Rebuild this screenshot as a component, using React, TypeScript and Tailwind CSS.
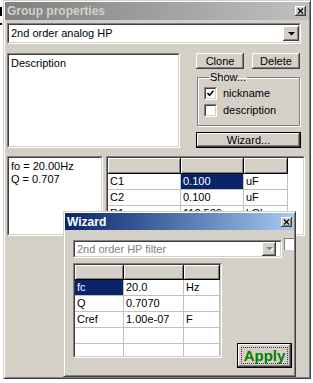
import type { ReactNode } from 'react'

const raised =
  'bg-[#d4d0c8] shadow-[inset_-1px_-1px_#404040,inset_1px_1px_#fff,inset_-2px_-2px_#808080]'

function Sunken({ className = '', inner = '', children }: { className?: string; inner?: string; children?: ReactNode }) {
  return (
    <div className={`border border-t-[#808080] border-l-[#808080] border-r-white border-b-white ${className}`}>
      <div className={`h-full border border-t-[#404040] border-l-[#404040] border-r-[#d4d0c8] border-b-[#d4d0c8] overflow-hidden ${inner}`}>
        {children}
      </div>
    </div>
  )
}

function CloseBox() {
  return (
    <div className={`w-[11px] h-[10px] flex items-center justify-center ${raised}`}>
      <svg width="7" height="6" viewBox="0 0 7 6">
        <path d="M1 0.5l5 5M6 0.5l-5 5" stroke="#000" strokeWidth="1.1" />
      </svg>
    </div>
  )
}

function Arrow({ off }: { off?: boolean }) {
  return (
    <svg width="7" height="4" viewBox="0 0 7 4">
      {off && <path d="M1 1h7l-3.5 3.5z" fill="#fff" />}
      <path d="M0 0h7l-3.5 3.5z" fill={off ? '#808080' : '#000'} />
    </svg>
  )
}

function Check({ on, label }: { on?: boolean; label: string }) {
  return (
    <div className="flex items-center h-[13px]">
      <Sunken className="w-[13px] h-[13px]" inner="bg-white flex items-center justify-center">
        {on && (
          <svg width="7" height="7" viewBox="0 0 7 7">
            <path d="M0.5 3l2 2.2 4-4.5" stroke="#000" strokeWidth="1.6" fill="none" />
          </svg>
        )}
      </Sunken>
      <span className="ml-[6px]">{label}</span>
    </div>
  )
}

const headCell =
  'h-full bg-[#d4d0c8] border-r border-b border-black shadow-[inset_1px_1px_#fff,inset_-1px_-1px_#808080]'
const cell = 'h-full border-r border-b border-[#c0c0c0] pl-[2px] leading-[15px] whitespace-nowrap overflow-hidden'

const mainRows = [
  ['C1', '0.100', 'uF'],
  ['C2', '0.100', 'uF'],
  ['R1', '112.539', 'kOhm'],
  ['R2', '112.539', 'kOhm'],
]

const wizRows = [
  ['fc', '20.0', 'Hz'],
  ['Q', '0.7070', ''],
  ['Cref', '1.00e-07', 'F'],
  ['', '', ''],
  ['', '', ''],
]

export default function App() {
  return (
    <div className="relative w-[313px] h-[383px] overflow-hidden bg-white pl-[3px] font-['Liberation_Sans',Arial,sans-serif] text-[11px] text-black">
      <div className="absolute left-0 top-[7px] w-[2px] h-[9px] bg-black" />
      <div className="absolute left-0 top-[23px] w-[2px] h-[2px] bg-black" />

      {/* Group properties window */}
      <div className="w-[308px] h-[379px] bg-[#d4d0c8] border border-t-[#d4d0c8] border-l-[#d4d0c8] border-r-[#404040] border-b-[#404040] shadow-[inset_1px_1px_#fff,inset_-1px_-1px_#808080] p-[1px]">
        <div className="h-[18px] flex items-center justify-between pl-[2px] pr-[3px] bg-linear-to-r from-[#808080] to-[#c0c0c0]">
          <span className="font-bold text-[12px] text-[#d4d0c8]">Group properties</span>
          <CloseBox />
        </div>

        <div className="pl-[2px] pt-[3px]">
          <Sunken className="w-[294px] h-[21px]" inner="bg-white flex items-center justify-between pl-[2px] pr-[0px]">
            <span>2nd order analog HP</span>
            <div className={`w-[16px] h-[15px] flex items-center justify-center ${raised}`}>
              <Arrow />
            </div>
          </Sunken>

          <div className="flex mt-[9px]">
            <Sunken className="w-[173px] h-[95px]" inner="bg-white pl-[2px] pt-[2px] leading-[13px]">
              Description
            </Sunken>
            <div className="ml-[16px] w-[105px]">
              <div className="flex gap-[8px]">
                <div className={`w-[48px] h-[16px] flex items-center justify-center ${raised}`}>Clone</div>
                <div className={`w-[48px] h-[16px] flex items-center justify-center ${raised}`}>Delete</div>
              </div>
              <fieldset className="mt-[2px] ml-[1px] w-[103px] border border-[#808080] shadow-[1px_1px_#fff,inset_1px_1px_#fff] pl-[6px] pb-[8px]">
                <legend className="ml-[5px] px-[1px] leading-[13px]">Show...</legend>
                <div className="mt-[3px] flex flex-col gap-[4px]">
                  <Check on label="nickname" />
                  <Check label="description" />
                </div>
              </fieldset>
              <div className="mt-[6px] w-[105px] h-[16px] border border-black">
                <div className={`h-full flex items-center justify-center ${raised}`}>Wizard...</div>
              </div>
            </div>
          </div>

          <div className="flex mt-[8px]">
            <Sunken className="w-[96px] h-[80px]" inner="bg-white pl-[2px] pt-[2px] leading-[13px]">
              <div>fo = 20.00Hz</div>
              <div>Q = 0.707</div>
            </Sunken>
            <Sunken className="ml-[3px] w-[199px] h-[80px]" inner="bg-white">
              <div className="flex h-[16px]">
                <div className={`w-[73px] ${headCell}`} />
                <div className={`w-[63px] ${headCell}`} />
                <div className={`w-[44px] ${headCell}`} />
              </div>
              {mainRows.map((r, i) => (
                <div key={i} className="flex h-[16px]">
                  <div className={`w-[73px] ${cell}`}>{r[0]}</div>
                  <div className={`w-[63px] ${cell} ${i === 0 ? 'bg-[#0a246a] text-white' : ''}`}>{r[1]}</div>
                  <div className={`w-[44px] ${cell}`}>{r[2]}</div>
                </div>
              ))}
            </Sunken>
          </div>
        </div>
      </div>

      {/* Wizard window, floating over the group window */}
      <div className="absolute left-[63px] top-[211px] w-[233px] h-[166px] bg-[#d4d0c8] border border-t-[#d4d0c8] border-l-[#d4d0c8] border-r-[#404040] border-b-[#404040] shadow-[inset_1px_1px_#fff,inset_-1px_-1px_#808080] p-[1px]">
        <div className="h-[17px] flex items-center justify-between pl-[2px] pr-[2px] bg-linear-to-r from-[#0a246a] to-[#a6caf0]">
          <span className="font-bold text-[12px] text-white">Wizard</span>
          <CloseBox />
        </div>
        <div className="pl-[8px] pt-[10px]">
          <div className="flex items-start">
            <Sunken className="w-[210px] h-[18px]" inner="bg-white flex items-center justify-between pl-[2px] pr-[4px]">
              <span className="text-[#808080]">2nd order HP filter</span>
              <div className={`w-[14px] h-[14px] flex items-center justify-center ${raised}`}>
                <Arrow off />
              </div>
            </Sunken>
            <div className="ml-[2px] -mt-[2px] w-[10px] h-[12px] bg-white border-t border-l border-[#808080]" />
          </div>
          <div className="flex items-start mt-[5px]">
            <Sunken className="w-[149px] h-[95px]" inner="bg-white">
              <div className="flex h-[15px]">
                <div className={`w-[49px] ${headCell}`} />
                <div className={`w-[60px] ${headCell}`} />
                <div className={`flex-1 ${headCell}`} />
              </div>
              {wizRows.map((r, i) => (
                <div key={i} className="flex h-[16px]">
                  <div className={`w-[49px] ${cell} ${i === 0 ? 'bg-[#0a246a] text-white' : ''}`}>{r[0]}</div>
                  <div className={`w-[60px] ${cell}`}>{r[1]}</div>
                  <div className={`flex-1 ${cell}`}>{r[2]}</div>
                </div>
              ))}
            </Sunken>
            <div className="ml-[15px] mt-[80px] w-[55px] h-[25px] border border-black">
              <div className={`h-full p-[3px] ${raised}`}>
                <div className="h-full border border-dotted border-[#602060] flex items-center justify-center">
                  <span className="font-bold text-[15px] leading-none text-[#008000]">Apply</span>
                </div>
              </div>
            </div>
          </div>
        </div>
      </div>
    </div>
  )
}
